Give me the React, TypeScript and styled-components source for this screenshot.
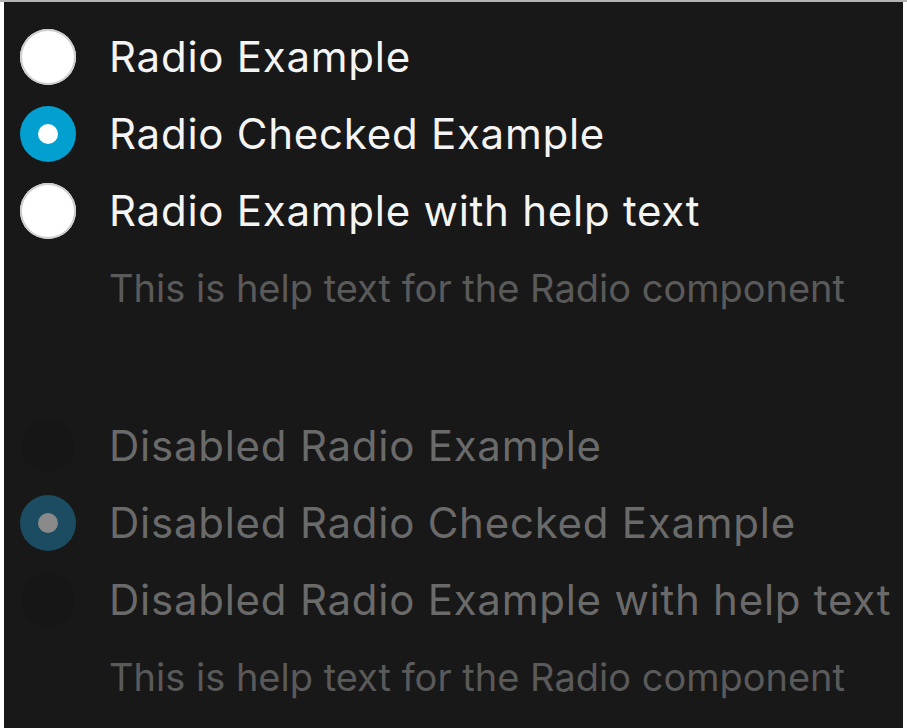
import React from "react";
import styled, { createGlobalStyle, css } from "styled-components";

const Global = createGlobalStyle`
  html, body { margin: 0; padding: 0; background: #ffffff; }
  body { font-family: Inter, "Liberation Sans", Arial, sans-serif; }
`;

const Frame = styled.div`
  border-top: 2px solid #b4b4b4;
  padding: 0 4px;
  background: #ffffff;
  height: 726px;
`;

const Panel = styled.div`
  background: #181818;
  height: 100%;
  padding: 16px 0 0 16px;
  box-sizing: border-box;
  display: flex;
  flex-direction: column;
  gap: 80px;
  overflow: hidden;
`;

const Group = styled.div`
  display: flex;
  flex-direction: column;
`;

const Row = styled.label<{ $disabled?: boolean }>`
  display: flex;
  align-items: center;
  gap: 33px;
  height: 77px;
  font-size: 42px;
  letter-spacing: 0.75px;
  color: ${(p) => (p.$disabled ? "#6a6a6a" : "#f4f4f4")};
  white-space: nowrap;
`;

const Circle = styled.span<{ $checked?: boolean; $disabled?: boolean }>`
  width: 56px;
  height: 56px;
  border-radius: 50%;
  box-sizing: border-box;
  display: flex;
  align-items: center;
  justify-content: center;
  flex: none;
  ${(p) =>
    p.$disabled
      ? p.$checked
        ? css`background: #1c4c61;`
        : css`background: #161616; border: 1px solid #1a1a1a;`
      : p.$checked
      ? css`background: #02a0d0;`
      : css`background: #ffffff; box-shadow: inset 0 0 0 2px #cfcfcf;`}
`;

const Dot = styled.span<{ $disabled?: boolean }>`
  width: 20px;
  height: 20px;
  border-radius: 50%;
  background: ${(p) => (p.$disabled ? "#8a8a8a" : "#ffffff")};
`;

const Help = styled.div`
  height: 78px;
  display: flex;
  align-items: center;
  padding-left: 89px;
  font-size: 38px;
  color: #5a5a5a;
  white-space: nowrap;
`;

type Item = { label: string; checked?: boolean; help?: string };

const RadioRow = ({ item, disabled }: { item: Item; disabled?: boolean }) => (
  <>
    <Row $disabled={disabled}>
      <Circle $checked={item.checked} $disabled={disabled}>
        {item.checked && <Dot $disabled={disabled} />}
      </Circle>
      {item.label}
    </Row>
    {item.help && <Help>{item.help}</Help>}
  </>
);

const helpText = "This is help text for the Radio component";

const enabled: Item[] = [
  { label: "Radio Example" },
  { label: "Radio Checked Example", checked: true },
  { label: "Radio Example with help text", help: helpText },
];

const disabled: Item[] = [
  { label: "Disabled Radio Example" },
  { label: "Disabled Radio Checked Example", checked: true },
  { label: "Disabled Radio Example with help text", help: helpText },
];

export default function App() {
  return (
    <>
      <Global />
      <Frame>
        <Panel>
          <Group>
            {enabled.map((it) => (
              <RadioRow key={it.label} item={it} />
            ))}
          </Group>
          <Group>
            {disabled.map((it) => (
              <RadioRow key={it.label} item={it} disabled />
            ))}
          </Group>
        </Panel>
      </Frame>
    </>
  );
}
